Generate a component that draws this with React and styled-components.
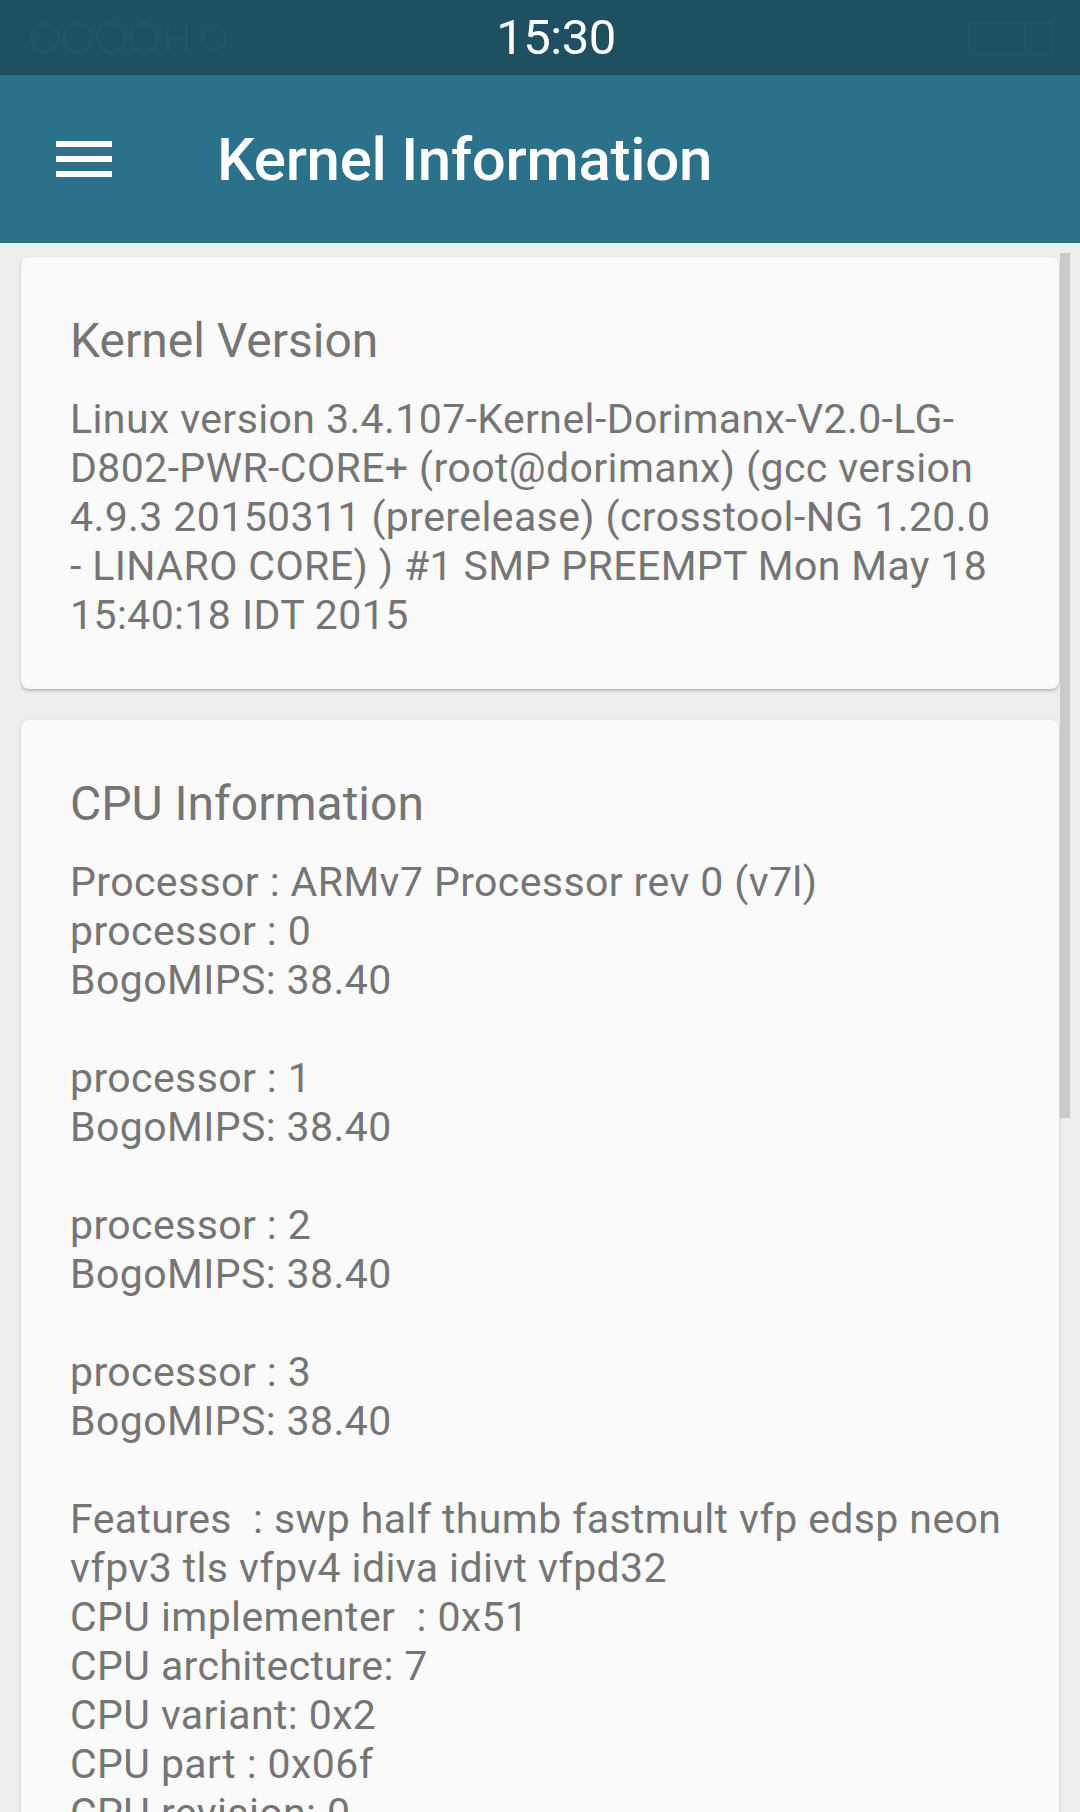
import styled, { createGlobalStyle } from 'styled-components';

const GlobalStyle = createGlobalStyle`
  html, body {
    margin: 0;
    padding: 0;
    overflow: hidden;
    background-color: #eeeeee;
  }
  body {
    font-family: Roboto, "Noto Sans", sans-serif;
  }
`;

const Screen = styled.div`
  width: 1080px;
  height: 1812px;
  display: flex;
  flex-direction: column;
  background-color: #eeeeee;
  overflow: hidden;
`;

const StatusBar = styled.div`
  height: 75px;
  flex-shrink: 0;
  display: flex;
  align-items: center;
  justify-content: space-between;
  padding: 0 28px;
  background-color: #1f5062;
  color: #ffffff;
`;

const StatusIcons = styled.div`
  display: flex;
  align-items: center;
  width: 252px;
`;

const Clock = styled.span`
  font-size: 49px;
  line-height: 75px;
  letter-spacing: -0.5px;
  color: #ffffff;
`;

const Battery = styled.div`
  width: 220px;
  display: flex;
  justify-content: flex-end;
`;

const AppBar = styled.header`
  height: 168px;
  flex-shrink: 0;
  display: flex;
  align-items: center;
  background-color: #2a7189;
  color: #ffffff;
`;

const MenuButton = styled.button`
  width: 217px;
  height: 100%;
  padding: 0 0 0 56px;
  margin: 0;
  border: none;
  background: transparent;
  display: flex;
  align-items: center;
  flex-shrink: 0;
`;

const Title = styled.h1`
  margin: 0;
  font-size: 60px;
  font-weight: 500;
  letter-spacing: -0.3px;
  color: #ffffff;
`;

const Content = styled.main`
  flex: 1;
  position: relative;
  display: flex;
  flex-direction: column;
  gap: 31px;
  padding: 14px 21px 0;
`;

const ScrollThumb = styled.div`
  position: absolute;
  top: 10px;
  right: 10px;
  width: 10px;
  height: 865px;
  background-color: #cacaca;
`;

const Card = styled.section`
  flex-shrink: 0;
  background-color: #fafafa;
  border-radius: 8px;
  padding: 56px 48px 49px 49px;
  box-shadow: 0 2px 3px rgba(0, 0, 0, 0.22), 0 0 1px rgba(0, 0, 0, 0.12);
`;

const CardTitle = styled.h2`
  margin: 0 0 26px;
  font-size: 48px;
  font-weight: 400;
  line-height: 56px;
  color: #757575;
`;

const CardBody = styled.p`
  margin: 0;
  font-size: 41px;
  line-height: 49px;
  letter-spacing: 0.4px;
  color: #757575;
  white-space: pre-wrap;
`;

function MenuIcon() {
  return (
    <svg width="56" height="36" viewBox="0 0 56 36">
      <rect x="0" y="0" width="56" height="6" fill="#ffffff" />
      <rect x="0" y="15" width="56" height="6" fill="#ffffff" />
      <rect x="0" y="30" width="56" height="6" fill="#ffffff" />
    </svg>
  );
}

function FaintNotifications() {
  return (
    <svg width="200" height="34" viewBox="0 0 200 34" fill="none" stroke="#215467" strokeWidth="3">
      <circle cx="17" cy="17" r="14" />
      <circle cx="50" cy="17" r="14" />
      <circle cx="83" cy="17" r="14" />
      <circle cx="116" cy="17" r="14" />
      <path d="M140 4 v26 M140 17 h18 M158 4 v26" />
      <circle cx="186" cy="17" r="12" />
    </svg>
  );
}

function FaintBattery() {
  return (
    <svg width="84" height="34" viewBox="0 0 84 34" fill="none" stroke="#215467" strokeWidth="2">
      <rect x="1" y="2" width="82" height="30" />
      <line x1="57" y1="2" x2="57" y2="32" />
    </svg>
  );
}

const kernelText =
  'Linux version 3.4.107-Kernel-Dorimanx-V2.0-LG-D802-PWR-CORE+ (root@dorimanx) (gcc version 4.9.3 20150311 (prerelease) (crosstool-NG 1.20.0 -\u00a0LINARO CORE) ) #1 SMP PREEMPT Mon May 18 15:40:18 IDT 2015';

const cpuText = [
  'Processor : ARMv7 Processor rev 0 (v7l)',
  'processor : 0',
  'BogoMIPS: 38.40',
  '',
  'processor : 1',
  'BogoMIPS: 38.40',
  '',
  'processor : 2',
  'BogoMIPS: 38.40',
  '',
  'processor : 3',
  'BogoMIPS: 38.40',
  '',
  'Features  : swp half thumb fastmult vfp edsp neon vfpv3 tls vfpv4 idiva idivt vfpd32',
  'CPU implementer  : 0x51',
  'CPU architecture: 7',
  'CPU variant: 0x2',
  'CPU part : 0x06f',
  'CPU revision: 0',
  '',
  'Hardware  : Qualcomm MSM 8974 (Flattened Device Tree)',
  'Revision  : 000b',
].join('\n');

function InfoCard({ title, children }) {
  return (
    <Card>
      <CardTitle>{title}</CardTitle>
      <CardBody>{children}</CardBody>
    </Card>
  );
}

export default function App() {
  return (
    <>
      <GlobalStyle />
      <Screen>
        <StatusBar>
          <StatusIcons>
            <FaintNotifications />
          </StatusIcons>
          <Clock>15:30</Clock>
          <Battery>
            <FaintBattery />
          </Battery>
        </StatusBar>
        <AppBar>
          <MenuButton aria-label="menu">
            <MenuIcon />
          </MenuButton>
          <Title>Kernel Information</Title>
        </AppBar>
        <Content>
          <ScrollThumb />
          <InfoCard title="Kernel Version">{kernelText}</InfoCard>
          <InfoCard title="CPU Information">{cpuText}</InfoCard>
        </Content>
      </Screen>
    </>
  );
}
